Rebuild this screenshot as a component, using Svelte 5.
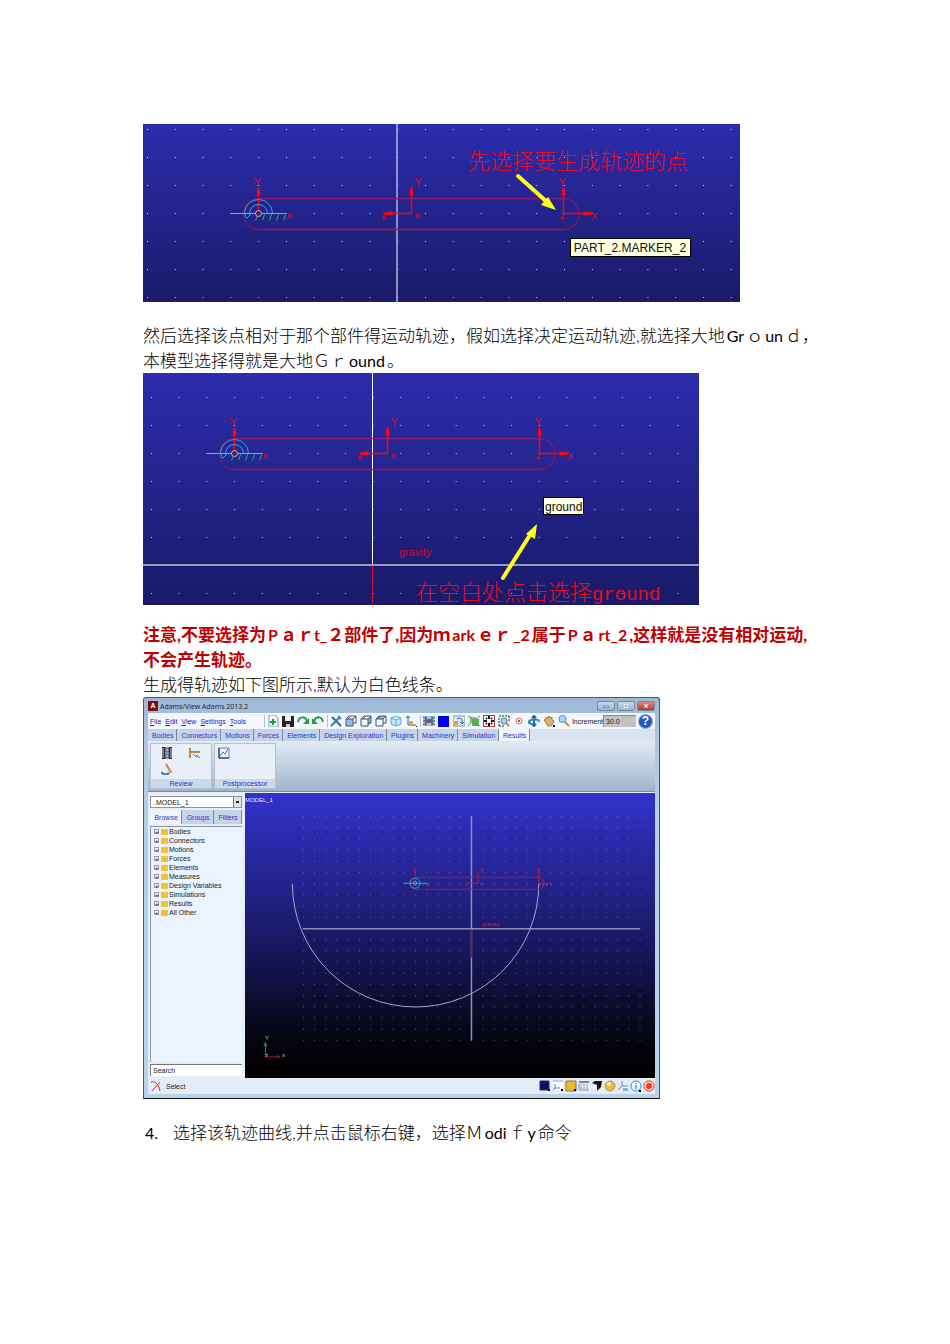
<script lang="ts">
    type Shape = { d: string; fill?: string; stroke?: string; w?: number };
    type Icon = { name: string; shapes: Shape[] };

    const box = 'M1 4H8V11H1ZM4 4V1H11V8H8M8 4L11 1M1 4L4 1';

    const fileIcons: Icon[] = [
        { name: 'New', shapes: [
            { d: 'M2 0H8L11 3V12H2Z', fill: '#f4f9ff', stroke: '#7c9cba' },
            { d: 'M6 4V10M3 7H9', stroke: '#1b9b3c', w: 2 },
        ] },
        { name: 'Save', shapes: [
            { d: 'M0 1H12V12H0Z', fill: '#222' },
            { d: 'M3 1H9V6H3Z', fill: '#e8eef6' },
            { d: 'M4 9H8V12H4Z', fill: '#ccd' },
        ] },
        { name: 'Redo', shapes: [
            { d: 'M1 7C2 1 8 1 10 6', stroke: '#2a9a4a', w: 2 },
            { d: 'M12 3V9H6Z', fill: '#2a9a4a' },
        ] },
        { name: 'Undo', shapes: [
            { d: 'M11 7C10 1 4 1 2 6', stroke: '#2a9a4a', w: 2 },
            { d: 'M0 3V9H6Z', fill: '#2a9a4a' },
        ] },
    ];

    const viewIcons: Icon[] = [
        { name: 'Tools', shapes: [
            { d: 'M2 2L11 11', stroke: '#2e6d8e', w: 2 },
            { d: 'M10 2L1 11M8 1L11 4', stroke: '#3b86a8', w: 2 },
        ] },
        { name: 'Front', shapes: [
            { d: 'M1 4H8V11H1Z', fill: '#86c4ec' },
            { d: box, stroke: '#456' },
        ] },
        { name: 'Right', shapes: [
            { d: 'M8 4L11 1V8L8 11Z', fill: '#86c4ec' },
            { d: box, stroke: '#456' },
        ] },
        { name: 'Top', shapes: [
            { d: 'M1 4L4 1H11L8 4Z', fill: '#86c4ec' },
            { d: box, stroke: '#456' },
        ] },
        { name: 'Isometric', shapes: [
            { d: 'M6 1L11 3V9L6 11L1 9V3ZM1 3L6 5L11 3M6 5V11', fill: '#c5ecff', stroke: '#4aaede' },
        ] },
        { name: 'Axes', shapes: [
            { d: 'M3 10V1M1 3L3 1L5 3M3 10H11', stroke: '#2468a8' },
            { d: 'M4 6H8V10H4Z', fill: '#e4a83c' },
            { d: 'M11 11H12V12H11Z', fill: '#111' },
        ] },
    ];

    const renderIcons: Icon[] = [
        { name: 'Grid', shapes: [
            { d: 'M0 1H12V11H0Z', fill: '#aac4e2' },
            { d: 'M0 2L12 10M12 2L0 10M0 6H12M3 1V11M9 1V11', stroke: '#32547c' },
            { d: 'M5 4H7V8H5Z', fill: '#b33' },
        ] },
        { name: 'Background', shapes: [{ d: 'M0 1H11V12H0Z', fill: '#0000f0' }] },
        { name: 'Spin', shapes: [
            { d: 'M0 1H12V11H0Z', fill: '#dbe8f6', stroke: '#7f96ad' },
            { d: 'M1 6H5V10H1Z', fill: '#e3a437' },
            { d: 'M4 4C7 2 10 4 9 8M7 7L9 9L11 7', stroke: '#27629b' },
        ] },
        { name: 'Parts', shapes: [
            { d: 'M2 2H8V8H2Z', fill: '#7cc474' },
            { d: 'M4 4H11V11H4Z', fill: '#5cab55' },
            { d: 'M0 1L4 3M12 1L8 4M0 11L3 8M12 11L8 9', stroke: '#5c9455' },
        ] },
        { name: 'Fit', shapes: [
            { d: 'M0 0H12V12H0Z', fill: '#fff', stroke: '#b43a3a', w: 2 },
            { d: 'M6 1V4M6 8V11M1 6H4M8 6H11M3 3L4 4M9 3L8 4M3 9L4 8M9 9L8 8', stroke: '#111', w: 2 },
        ] },
        { name: 'Zoom box', shapes: [
            { d: 'M1 1H3M4 1H6M7 1H9M10 1H11V3M11 4V6M1 3V5M1 6V8M1 9V11H3M4 11H6', stroke: '#222' },
            { d: 'M3 6A3 3 0 1 0 9 6A3 3 0 1 0 3 6', fill: '#9fd3f5', stroke: '#3b7fb8' },
            { d: 'M8 8L11 11', stroke: '#c78a32', w: 2 },
        ] },
        { name: 'Center', shapes: [
            { d: 'M3 6A3 3 0 1 0 9 6A3 3 0 1 0 3 6', stroke: '#f06a4a' },
            { d: 'M5 5H7V7H5Z', fill: '#e03c1c' },
        ] },
        { name: 'Rotate', shapes: [
            { d: 'M6 1V11M4 3L6 1L8 3M4 9L6 11L8 9', stroke: '#1c6aa8', w: 2 },
            { d: 'M1 8C-1 4 12 3 11 7M2 5L1 8L4 9', stroke: '#2a87c8', w: 2 },
        ] },
        { name: 'Pan', shapes: [
            { d: 'M1 5L3 4L3 2L5 3L6 1L7 3L9 2V5L11 6L9 10L7 11H5Z', fill: '#e5ae63', stroke: '#a87a40' },
            { d: 'M10 10H12V12H10Z', fill: '#111' },
        ] },
        { name: 'Zoom', shapes: [
            { d: 'M1 4A3 3 0 1 0 8 4A3 3 0 1 0 1 4', fill: '#a6daf8', stroke: '#4a92c8' },
            { d: 'M7 7L11 11', stroke: '#c78a32', w: 2 },
        ] },
    ];

    const reviewIcons: Icon[] = [
        { name: 'Animation', shapes: [
            { d: 'M1 0H4V12H1ZM8 0H11V12H8Z', fill: '#222' },
            { d: 'M4 1H8V5H4ZM4 7H8V11H4Z', fill: '#9fb4d8', stroke: '#33415c' },
            { d: 'M2 1V11M10 1V11', stroke: '#ddd' },
        ] },
        { name: 'Measure', shapes: [
            { d: 'M1 1V11M1 5H11', stroke: '#b98b45', w: 2 },
            { d: 'M4 7L7 10L10 9M7 8L11 11', stroke: '#4a86c6' },
        ] },
        { name: 'Trace', shapes: [
            { d: 'M5 1L9 8', stroke: '#b98b45', w: 2 },
            { d: 'M8 7H11V10H8Z', fill: '#dba047' },
            { d: 'M0 9C2 12 6 12 8 10', stroke: '#2f7cc0', w: 2 },
        ] },
    ];

    const plotIcon: Icon = { name: 'Plot', shapes: [
        { d: 'M1 1H11V11H1Z', fill: '#e2f3ff', stroke: '#6c8298' },
        { d: 'M2 9L5 5L7 7L10 2', stroke: '#2a8bd0' },
        { d: 'M1 1V11H11', stroke: '#222' },
    ] };

    const statusIcons: Icon[] = [
        { name: 'Color', shapes: [
            { d: 'M1 1H10V10H1Z', fill: '#0b0b78', stroke: '#334' },
            { d: 'M9 9H11V11H9Z', fill: '#000' },
        ] },
        { name: 'Triad', shapes: [
            { d: 'M1 1H11V10H1Z', fill: '#fff' },
            { d: 'M1 1H11', stroke: '#9ab' },
            { d: 'M3 4V8H8M3 8L1 10', stroke: '#3a8ac0' },
            { d: 'M9 9H11V11H9Z', fill: '#000' },
        ] },
        { name: 'Window', shapes: [
            { d: 'M1 1H11V11H1Z', fill: '#efb92e', stroke: '#8d7440' },
            { d: 'M9 9H11V11H9Z', fill: '#000' },
        ] },
        { name: 'Working grid', shapes: [
            { d: 'M1 2H11', stroke: '#789', w: 2 },
            { d: 'M2 5H4M5 5H7M8 5H10M2 8H4M5 8H7M8 8H10M1 10H11M1 4V10', stroke: '#89a' },
        ] },
        { name: 'Shading', shapes: [
            { d: 'M1 3L4 1H11L10 7L6 11V5Z', fill: '#151515' },
        ] },
        { name: 'Render', shapes: [
            { d: 'M1 6A5 5 0 1 0 11 6A5 5 0 1 0 1 6', fill: '#e8b648', stroke: '#b9934d' },
            { d: 'M3 4A2 2 0 1 0 7 4A2 2 0 1 0 3 4', fill: '#fff0b8' },
        ] },
        { name: 'Icons', shapes: [
            { d: 'M5 1V6L1 10M5 6H11', stroke: '#39a0d8' },
            { d: 'M6 8H11V11H6Z', fill: '#7fb4d8' },
        ] },
        { name: 'Info', shapes: [
            { d: 'M1 6A5 5 0 1 0 11 6A5 5 0 1 0 1 6', fill: '#f0f8ff', stroke: '#3a8fd0' },
            { d: 'M6 3V4M6 5V9', stroke: '#1a5fa8' },
            { d: 'M9 10H11V12H9Z', fill: '#000' },
        ] },
        { name: 'Stop', shapes: [
            { d: 'M4 1H8L11 4V8L8 11H4L1 8V4Z', fill: '#fbd5cb', stroke: '#e0492e' },
            { d: 'M3 6A3 3 0 1 0 9 6A3 3 0 1 0 3 6', fill: '#ef3c1c' },
        ] },
    ];

    const menus = ['File', 'Edit', 'View', 'Settings', 'Tools'];
    const ribbonTabs = [
        'Bodies', 'Connectors', 'Motions', 'Forces', 'Elements',
        'Design Exploration', 'Plugins', 'Machinery', 'Simulation', 'Results',
    ];
    const browserTabs = ['Browse', 'Groups', 'Filters'];
    const treeItems = [
        'Bodies', 'Connectors', 'Motions', 'Forces', 'Elements',
        'Measures', 'Design Variables', 'Simulations', 'Results', 'All Other',
    ];

    let activeRibbon = $state('Results');
    let activeBrowser = $state('Browse');
</script>

{#snippet glyph(icon: Icon)}
    <svg class="glyph" viewBox="0 0 12 12" aria-hidden="true">
        {#each icon.shapes as s}
            <path d={s.d} fill={s.fill ?? 'none'} stroke={s.stroke ?? 'none'} stroke-width={s.w ?? 1} />
        {/each}
    </svg>
{/snippet}

{#snippet iconButton(icon: Icon)}
    <button class="icon" type="button" aria-label={icon.name}>{@render glyph(icon)}</button>
{/snippet}

{#snippet linkage()}
    <!-- link body with its joint at 0,0 and the far marker at 305,0 -->
    <path d="M0 -15H305" stroke="#8a1c68" stroke-width="1.5" />
    <path d="M0 16H305" stroke="#b81040" stroke-width="1.5" />
    <path d="M0 -15A15 15 0 0 0 0 16M305 -15A15 15 0 0 1 305 16" stroke="#b01040" fill="none" />
    <path d="M0 0V-24M153 0V-24M153 0H128M305 0V-24M305 0H332" stroke="#f00818" stroke-width="1.5" fill="none" />
    <path
        d="M-2 -18L-1 -26H1L2 -18ZM151 -18L152 -26H154L155 -18ZM303 -18L304 -26H306L307 -18ZM134 -2L125 -1V1L134 2ZM325 -2L334 -1V1L325 2Z"
        fill="#ff0414"
    />
    <path d="M-14 0A14 14 0 1 1 14 0M-9 0A9 9 0 1 1 9 0M-14 0L-12 5L-7 0" stroke="#2ba4e4" fill="none" />
    <path d="M-1 2L-3 7M6 1L4 7M13 1L11 7M20 1L18 7M27 1L25 7" stroke="#18c050" />
    <path d="M-28 0H28" stroke="#35c8f0" />
    <circle r="3" fill="#402060" stroke="#e8a0b0" />
    <g class="axis-label">
        <text x="-5" y="-28">Y</text>
        <text x="28" y="5">x</text>
        <text x="156" y="-28">Y</text>
        <text x="123" y="5">z</text>
        <text x="156" y="5">x</text>
        <text x="300" y="-28">Y</text>
        <text x="301" y="5">z</text>
        <text x="333" y="5">x</text>
    </g>
{/snippet}

<main class="page">
    <svg class="scene scene-marker" viewBox="0 0 597 178">
        <defs>
            <linearGradient id="sky" x1="0" y1="0" x2="0" y2="1">
                <stop offset="0" stop-color="#2c2cae" />
                <stop offset="1" stop-color="#1a1a68" />
            </linearGradient>
            <pattern id="dotsA" x="4" y="5" width="27.8" height="28" patternUnits="userSpaceOnUse">
                <rect width="1" height="1" fill="#d4d4f4" />
            </pattern>
        </defs>
        <rect width="597" height="178" fill="url(#sky)" />
        <rect width="597" height="178" fill="url(#dotsA)" />
        <path d="M254 0V178" stroke="#b4b4dc" stroke-width="1.5" />
        <g transform="translate(115.5 89.5)">{@render linkage()}</g>
        <text class="note" x="325" y="45">先选择要生成轨迹的点</text>
        <path d="M375 52L404 78" stroke="#ffff20" stroke-width="4" stroke-linecap="round" />
        <path d="M413 86L398 81L405 73Z" fill="#ffff20" />
        <rect x="427.5" y="114.5" width="120" height="18" fill="#ffffe1" stroke="#000" />
        <text class="tip" x="487" y="128" text-anchor="middle">PART_2.MARKER_2</text>
    </svg>

    <p class="line after-scene">然后选择该点相对于那个部件得运动轨迹，假如选择决定运动轨迹,就选择大地<span class="latin">Gr</span>ｏ<span class="latin">un</span>ｄ，</p>
    <p class="line">本模型选择得就是大地Ｇｒ<span class="latin">ound</span>。</p>

    <svg class="scene scene-ground" viewBox="0 0 556 232">
        <defs>
            <pattern id="dotsB" x="8" y="24" width="27.7" height="28" patternUnits="userSpaceOnUse">
                <rect width="1" height="1" fill="#c4c4ea" />
            </pattern>
        </defs>
        <rect width="556" height="232" fill="url(#sky)" />
        <rect width="556" height="232" fill="url(#dotsB)" />
        <path d="M229.5 0V192" stroke="#fff" />
        <path d="M0 192H556" stroke="#9a9ac6" stroke-width="2" />
        <path d="M229.5 193V232" stroke="#d0102c" />
        <g transform="translate(91.5 80.5)">{@render linkage()}</g>
        <text class="gravity" x="256" y="183">gravity</text>
        <rect x="400.5" y="124.5" width="40" height="17" fill="#ffffe1" stroke="#000" />
        <text class="tip" x="402" y="138">ground</text>
        <text class="note" x="273" y="227">在空白处点击选择<tspan class="note-latin">ground</tspan></text>
        <path d="M360 205L387 162" stroke="#ffff20" stroke-width="4" stroke-linecap="round" />
        <path d="M394 151L392 166L383 161Z" fill="#ffff20" />
    </svg>

    <p class="line warning after-ground">注意,不要选择为<span class="latin">P</span>ａｒ<span class="latin tight">t_</span>２部件了,因为ｍ<span class="latin">ark</span>ｅｒ<span class="latin">_2</span>属于<span class="latin">P</span>ａ<span class="latin">rt_2</span>,这样就是没有相对运动,</p>
    <p class="line warning">不会产生轨迹。</p>
    <p class="line">生成得轨迹如下图所示,默认为白色线条。</p>

    <section class="window" aria-label="Adams/View">
        <header class="titlebar">
            <span class="app-mark">A</span>
            <span class="title">Adams/View Adams 2013.2</span>
            <button class="win-button" type="button" aria-label="Minimize">
                <svg viewBox="0 0 18 10"><path d="M6 5H12V7H6Z" fill="#fff" stroke="#678" /></svg>
            </button>
            <button class="win-button" type="button" aria-label="Maximize">
                <svg viewBox="0 0 18 10"><path d="M7 3H11V7H7Z" fill="#9ab" stroke="#fff" /></svg>
            </button>
            <button class="win-button close" type="button" aria-label="Close">
                <svg viewBox="0 0 18 10"><path d="M7 3L11 7M11 3L7 7" stroke="#fff" stroke-width="1.5" /></svg>
            </button>
        </header>

        <div class="toolbar">
            <nav class="menus">
                {#each menus as menu}
                    <button type="button"><u>{menu[0]}</u>{menu.slice(1)}</button>
                {/each}
            </nav>
            <div class="tools">
                {#each [fileIcons, viewIcons, renderIcons] as group}
                    <div class="tool-group">
                        {#each group as icon}
                            {@render iconButton(icon)}
                        {/each}
                    </div>
                {/each}
            </div>
            <label for="increment">Increment</label>
            <input id="increment" type="text" value="30.0" />
            <button class="help" type="button" aria-label="Help">?</button>
        </div>

        <div class="tabs">
            {#each ribbonTabs as tab}
                <button type="button" class:active={tab === activeRibbon} onclick={() => (activeRibbon = tab)}>{tab}</button>
            {/each}
        </div>

        <div class="ribbon">
            <div class="panel">
                <div class="panel-icons">
                    {#each reviewIcons as icon}
                        {@render iconButton(icon)}
                    {/each}
                </div>
                <div class="panel-name">Review</div>
            </div>
            <div class="panel">
                <div class="panel-icons">{@render iconButton(plotIcon)}</div>
                <div class="panel-name">Postprocessor</div>
            </div>
        </div>

        <div class="workspace">
            <aside class="browser">
                <div class="combo">
                    <select aria-label="Model">
                        <option>.MODEL_1</option>
                    </select>
                    <span class="combo-arrow"></span>
                </div>
                <div class="tabs browser-tabs">
                    {#each browserTabs as tab}
                        <button type="button" class:active={tab === activeBrowser} onclick={() => (activeBrowser = tab)}>{tab}</button>
                    {/each}
                </div>
                <ul class="tree">
                    {#each treeItems as item}
                        <li><span class="expander">+</span><span class="folder"></span>{item}</li>
                    {/each}
                </ul>
                <input class="search" type="text" aria-label="Search" value="Search" />
            </aside>
            <svg class="viewport" viewBox="0 0 411 286">
                <defs>
                    <linearGradient id="night" x1="0" y1="0" x2="0" y2="1">
                        <stop offset="0" stop-color="#3232cc" />
                        <stop offset="0.45" stop-color="#1c1c72" />
                        <stop offset="0.88" stop-color="#04040e" />
                        <stop offset="1" stop-color="#000" />
                    </linearGradient>
                    <pattern id="dotsC" x="58" y="23" width="11.25" height="11.22" patternUnits="userSpaceOnUse">
                        <rect width="1" height="1" fill="#8888b4" opacity="0.7" />
                    </pattern>
                </defs>
                <rect width="411" height="286" fill="url(#night)" />
                <rect x="58" y="23" width="339" height="226" fill="url(#dotsC)" />
                <path d="M227 23V248M58 136H396" stroke="#8e8eb6" stroke-width="1.5" />
                <path d="M227 137V165" stroke="#8c1030" stroke-width="1.5" />
                <path d="M47.5 91A123.5 123.5 0 0 0 294.5 91" stroke="#a8a8cc" fill="none" />
                <path d="M171 84.5H294A6 6 0 0 1 294 96.5H171A6 6 0 0 1 171 84.5" stroke="#c01038" fill="none" />
                <path d="M170.5 90V76M294.5 90V76M233.5 90V79M233 90.5H222M294 90.5H304" stroke="#dc1024" />
                <path d="M159 90.5H183" stroke="#20b0e0" />
                <circle cx="170.5" cy="90.5" r="5" stroke="#20a0dc" fill="none" />
                <circle cx="170.5" cy="90.5" r="2" stroke="#20b0e0" fill="none" />
                <path d="M170 93L172 91M174 93L176 91M178 93L180 91M182 93L184 91M294 93L296 91M298 93L300 91M302 93L304 91" stroke="#20a060" />
                <g class="tiny red">
                    <text x="168" y="79">Y</text>
                    <text x="182" y="93">x</text>
                    <text x="235" y="79">Y</text>
                    <text x="220" y="93">z</text>
                    <text x="235" y="93">x</text>
                    <text x="292" y="79">Y</text>
                    <text x="305" y="93">x</text>
                    <text x="237" y="133">gravity</text>
                </g>
                <text class="model-name" x="0" y="9">MODEL_1</text>
                <path d="M20.5 263V251M19 254L20.5 250L22 254" stroke="#149a28" fill="none" />
                <path d="M21 264.5H34M32 263L35 264.5L32 266" stroke="#a01818" fill="none" />
                <g class="tiny white">
                    <text x="20" y="248">Y</text>
                    <text x="20" y="265">z</text>
                    <text x="37" y="265">x</text>
                </g>
            </svg>
        </div>

        <footer class="status">
            <svg class="glyph" viewBox="0 0 12 12" aria-hidden="true">
                <path d="M1 2C5 1 8 3 10 11M10 2L2 11" stroke="#e02420" fill="none" />
            </svg>
            <span class="status-text">Select</span>
            {#each statusIcons as icon}
                {@render iconButton(icon)}
            {/each}
        </footer>
    </section>

    <ol class="steps">
        <li class="line"><span class="number latin">4.</span>选择该轨迹曲线,并点击鼠标右键，选择Ｍ<span class="latin">odi</span>ｆ<span class="latin">y</span>命令</li>
    </ol>
</main>

<style>
    :global(body) {
        margin: 0;
        background: #fff;
    }

    .page {
        padding: 124px 128px 60px 143px;
        color: #000;
        font-family: Lato, "Noto Sans CJK SC", sans-serif;
        font-size: 17px;
        font-weight: 300;
        line-height: 25px;
    }

    .latin {
        margin: 0 2px;
        font-size: 16px;
        font-weight: 400;
        line-height: 1;
    }

    .latin.tight {
        margin: 0;
    }

    .scene {
        display: block;
        width: 100%;
    }

    .scene-marker {
        max-width: 597px;
    }

    .scene-ground {
        max-width: 556px;
    }

    .note {
        font-size: 22px;
        fill: #e80c1c;
    }

    .note-latin {
        font-family: "Liberation Mono", monospace;
        font-size: 19px;
    }

    .tip,
    .gravity {
        font-family: "Liberation Sans", sans-serif;
        font-size: 12px;
        font-weight: 400;
        fill: #111;
    }

    .gravity {
        fill: #c8102c;
        font-size: 11px;
    }

    .axis-label {
        font-family: "Liberation Sans", sans-serif;
        font-size: 11px;
        font-weight: 400;
        fill: #d40c24;
    }

    .line {
        margin: 0;
        white-space: nowrap;
    }

    .after-scene {
        margin-top: 21px;
    }

    .after-ground {
        margin-top: 17px;
    }

    .warning,
    .warning .latin {
        color: #c00000;
        font-weight: bold;
    }

    .steps {
        margin: 21px 0 0;
        padding: 0;
        list-style: none;
    }

    .number {
        display: inline-block;
        width: 26px;
    }

    .window {
        box-sizing: border-box;
        max-width: 517px;
        padding: 0 4px 4px;
        border: 1px solid #45586c;
        border-bottom-color: #111;
        border-radius: 3px 3px 0 0;
        background: linear-gradient(#9db9d6, #b2cce6 60px, #b8d4ec);
        color: #222;
        font-family: "Liberation Sans", sans-serif;
        font-size: 7px;
        font-weight: 400;
        line-height: 9px;
    }

    .window button,
    .window input,
    .window select {
        margin: 0;
        padding: 0;
        border: 0;
        background: none;
        color: inherit;
        font: inherit;
    }

    .titlebar {
        display: flex;
        align-items: center;
        gap: 2px;
        height: 15px;
        padding-top: 1px;
        box-sizing: border-box;
    }

    .app-mark {
        width: 10px;
        height: 10px;
        background: #7c0c10;
        color: #fff;
        font-weight: bold;
        text-align: center;
    }

    .title {
        flex: 1;
        font-family: "Open Sans", sans-serif;
    }

    .window .win-button {
        width: 18px;
        height: 10px;
        border: 1px solid #7089a4;
        border-radius: 2px;
        background: linear-gradient(#c6d8ea, #9cb6d0);
        box-sizing: border-box;
    }

    .win-button svg {
        display: block;
        width: 100%;
        height: 100%;
    }

    .window .win-button.close {
        background: linear-gradient(#dc8c80, #b83820);
    }

    .glyph {
        display: block;
        width: 12px;
        height: 12px;
    }

    .toolbar {
        display: flex;
        align-items: center;
        height: 16px;
        background: #f3f7fd;
    }

    .menus {
        display: flex;
        flex: 1;
        gap: 4px;
        padding-left: 2px;
        color: #2222c8;
    }

    .tools {
        display: flex;
        gap: 3px;
    }

    .tool-group {
        display: flex;
        gap: 3px;
        padding-left: 2px;
        border-left: 1px solid #b8c0cc;
    }

    .toolbar label {
        margin-left: 2px;
    }

    .toolbar #increment {
        width: 33px;
        height: 12px;
        padding-left: 2px;
        border-top: 1px solid #888;
        border-left: 1px solid #888;
        background: #c3c3c3;
        box-sizing: border-box;
    }

    .window .help {
        width: 15px;
        height: 15px;
        margin: 0 2px;
        border: 1px solid #8fb2e8;
        border-radius: 50%;
        background: #2458c0;
        color: #fff;
        font-size: 12px;
        font-weight: bold;
        line-height: 12px;
        box-sizing: border-box;
    }

    .tabs {
        display: flex;
        height: 12px;
        background: #d9e4f2;
        color: #3030d0;
    }

    .tabs button {
        padding: 0 3px 0 4px;
        border-right: 1px solid #7c8a9c;
        background: #c5d5e7;
    }

    .tabs button.active {
        background: #f0f5fc;
    }

    .ribbon {
        display: flex;
        gap: 2px;
        height: 46px;
        padding: 2px;
        border-bottom: 1px solid #7d8ea4;
        background: linear-gradient(#e2ebf5, #9fb4cc);
    }

    .panel {
        display: flex;
        flex-direction: column;
        width: 62px;
        border: 1px solid #b4c2d2;
        background: #e8eff8;
        box-sizing: border-box;
    }

    .panel-icons {
        display: flex;
        flex: 1;
        flex-wrap: wrap;
        align-content: flex-start;
        column-gap: 16px;
        row-gap: 4px;
        padding: 3px 3px 0 10px;
    }

    .panel + .panel .panel-icons {
        padding-left: 3px;
    }

    .panel-name {
        background: #cbdaeb;
        color: #3030d0;
        text-align: center;
    }

    .workspace {
        display: flex;
        border-top: 1px solid #e4ecf6;
    }

    .browser {
        display: flex;
        flex: none;
        flex-direction: column;
        width: 97px;
        padding: 3px 3px 2px 2px;
        background: #e6eef8;
        box-sizing: border-box;
    }

    .combo {
        display: flex;
        align-items: center;
        height: 12px;
        border: 1px solid #8c96a2;
        background: #fff;
        box-sizing: border-box;
    }

    .combo select {
        flex: 1;
        padding-left: 3px;
        appearance: none;
    }

    .combo-arrow {
        width: 7px;
        height: 10px;
        background: linear-gradient(#222, #222) center / 3px 2px no-repeat #dde3ea;
        border-left: 1px solid #777;
        pointer-events: none;
    }

    .browser-tabs {
        height: 14px;
        margin: 2px 0;
    }

    .browser-tabs button {
        flex: 1 1 auto;
    }

    .tree {
        flex: 1;
        margin: 0;
        padding: 0 0 0 3px;
        border-top: 1px solid #8c96a2;
        border-left: 1px solid #8c96a2;
        background: #eaf3fe;
        list-style: none;
    }

    .tree li {
        display: flex;
        align-items: center;
    }

    .expander {
        width: 5px;
        height: 5px;
        margin-right: 2px;
        border: 1px solid #99a;
        font-size: 6px;
        line-height: 5px;
        text-align: center;
        box-sizing: border-box;
    }

    .folder {
        width: 7px;
        height: 6px;
        margin-right: 1px;
        background: #f6c12c;
    }

    .browser .search {
        width: 100%;
        height: 12px;
        margin-top: 2px;
        padding-left: 2px;
        border-top: 1px solid #777;
        border-left: 1px solid #777;
        background: #fff;
        box-sizing: border-box;
    }

    .viewport {
        display: block;
        flex: 1;
        min-width: 0;
    }

    .tiny {
        font-size: 6px;
    }

    .red {
        fill: #e81028;
    }

    .white {
        fill: #ccc;
    }

    .model-name {
        font-size: 6px;
        fill: #e8e8ff;
    }

    .status {
        display: flex;
        align-items: center;
        gap: 1px;
        height: 16px;
        padding: 0 0 0 2px;
        background: #e4ecf8;
    }

    .status-text {
        flex: 1;
        margin-left: 3px;
    }
</style>
